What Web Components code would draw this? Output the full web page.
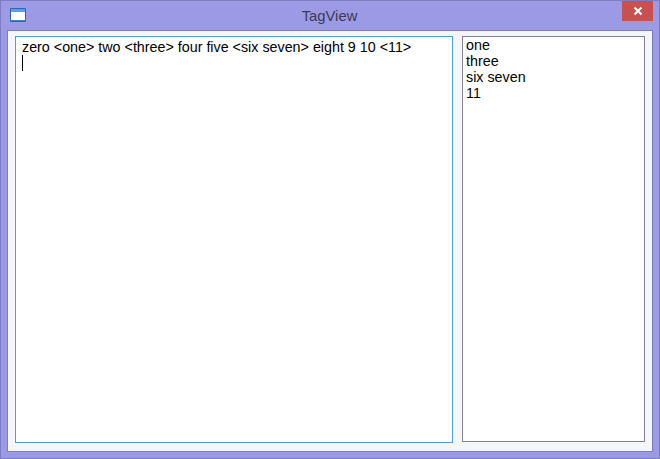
<!DOCTYPE html>
<html>
<head>
<meta charset="utf-8">
<title>TagView</title>
<style>
  html, body { margin: 0; height: 100%; overflow: hidden; }
</style>
</head>
<body>
<ventana-app titulo="TagView">
  <caja-texto>zero &lt;one&gt; two &lt;three&gt; four five &lt;six seven&gt; eight 9 10 &lt;11&gt;</caja-texto>
  <lista-tags></lista-tags>
</ventana-app>

<script>
class VentanaApp extends HTMLElement {
    constructor() {
        super();
        this.attachShadow({ mode: "open" });
    }

    connectedCallback() {
        this.shadowRoot.innerHTML = `
            <style>
                :host {
                    display: flex;
                    flex-direction: column;
                    box-sizing: border-box;
                    width: 660px;
                    height: 459px;
                    background: #9c9ae4;
                    border: 1px solid #7d7cc0;
                    font-family: "Liberation Sans", Arial, sans-serif;
                }

                .titulo {
                    display: flex;
                    align-items: flex-start;
                    height: 29px;
                    flex: none;
                    position: relative;
                }

                .icono { margin: 7px 0 0 9px; display: block; }

                .nombre {
                    position: absolute;
                    left: 0;
                    right: 1px;
                    top: 7px;
                    text-align: center;
                    font-size: 14.8px;
                    line-height: 16px;
                    color: #3a3a55;
                }

                .cerrar {
                    position: absolute;
                    right: 6px;
                    top: 0;
                    width: 31px;
                    height: 20px;
                    background: #c75050;
                    display: flex;
                    align-items: center;
                    justify-content: center;
                }

                .cliente {
                    flex: 1;
                    margin: 0 6px 6px 6px;
                    padding: 5px 7px 8px 7px;
                    background: #f5f6f7;
                    border: 1px solid #7d7cc0;
                    display: grid;
                    grid-template-columns: 438px 183px;
                    column-gap: 9px;
                    min-height: 0;
                }
            </style>
            <div class="titulo">
                <svg class="icono" width="16" height="14" viewBox="0 0 16 14">
                    <rect x="0" y="0" width="16" height="14" rx="1" fill="#2f66b4"/>
                    <rect x="1" y="1" width="14" height="3" fill="#5a9fe6"/>
                    <rect x="1" y="4" width="14" height="8" fill="#ffffff"/>
                    <rect x="1" y="12" width="14" height="1" fill="#4a7fc6"/>
                </svg>
                <span class="nombre">${this.getAttribute("titulo")}</span>
                <div class="cerrar">
                    <svg width="10" height="10" viewBox="0 0 10 10">
                        <path d="M1.5 1.5 L8.5 8.5 M8.5 1.5 L1.5 8.5" stroke="#fff" stroke-width="2"/>
                    </svg>
                </div>
            </div>
            <div class="cliente"><slot></slot></div>
        `;
    }
}

class CajaTexto extends HTMLElement {
    constructor() {
        super();
        this.attachShadow({ mode: "open" });
    }

    connectedCallback() {
        this.shadowRoot.innerHTML = `
            <style>
                :host {
                    display: block;
                    box-sizing: border-box;
                    height: 407px;
                    background: #fff;
                    border: 1px solid #4a9fe0;
                    padding: 2px 6px;
                    font-size: 14.3px;
                    line-height: 16px;
                    color: #000;
                }
                .cursor {
                    width: 1px;
                    height: 16px;
                    background: #000;
                }
            </style>
            <div><slot></slot></div>
            <div class="cursor"></div>
        `;
    }
}

class ListaTags extends HTMLElement {
    constructor() {
        super();
        this.attachShadow({ mode: "open" });
        this.tags = ["one", "three", "six seven", "11"];
    }

    connectedCallback() {
        const filas = this.tags.map((t) => `<div>${t}</div>`).join("");
        this.shadowRoot.innerHTML = `
            <style>
                :host {
                    display: block;
                    box-sizing: border-box;
                    height: 406px;
                    background: #fff;
                    border: 1px solid #82819b;
                    padding: 0 3px;
                    font-size: 14.3px;
                    line-height: 16px;
                    color: #000;
                }
            </style>
            ${filas}
        `;
    }
}

customElements.define("ventana-app", VentanaApp);
customElements.define("caja-texto", CajaTexto);
customElements.define("lista-tags", ListaTags);
</script>
</body>
</html>
